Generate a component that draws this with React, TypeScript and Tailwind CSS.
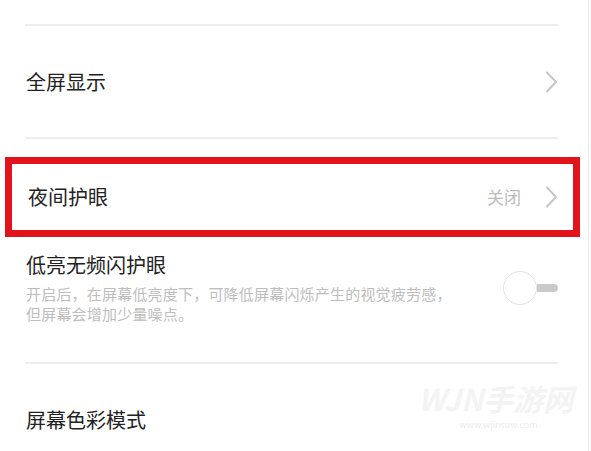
import React from "react";

const Chevron: React.FC = () => (
  <svg width="13" height="22" viewBox="0 0 13 22" fill="none">
    <polyline
      points="2,1.5 11,11 2,20.5"
      stroke="#c6c6c6"
      strokeWidth="2"
      strokeLinecap="round"
      strokeLinejoin="round"
    />
  </svg>
);

const Toggle: React.FC = () => (
  <div className="flex items-center shrink-0">
    <div className="w-[34px] h-[34px] rounded-full border border-[#e2e2e2] bg-white" />
    <div className="w-[21px] h-[8px] rounded-r-full bg-[#cacaca]" />
  </div>
);

const Divider: React.FC = () => <div className="h-[2px] shrink-0 bg-[#ededed]" />;

export default function App() {
  return (
    <div
      className="relative flex w-[591px] h-[451px] overflow-hidden bg-white"
      style={{ fontFamily: '"Noto Sans CJK SC", "Noto Sans", sans-serif' }}
    >
      <div className="flex flex-col w-[589px] h-full border-r border-[#ebebeb] pl-[25px] pr-[30px] pt-[24px]">
        <Divider />
        <div className="flex shrink-0 items-center justify-between h-[111px] pl-[1px]">
          <span className="text-[20px] leading-[26px] text-[#222]">全屏显示</span>
          <Chevron />
        </div>
        <Divider />

        <div className="shrink-0 mt-[18px] ml-[-20px] mr-[-22px] h-[80px] border-[7px] border-[#e3131b] flex items-center justify-between pl-[16px] pr-[15px]">
          <span className="text-[20px] leading-[26px] text-[#222]">夜间护眼</span>
          <div className="flex items-center gap-[24px]">
            <span className="text-[17px] text-[#bcbcbc]">关闭</span>
            <Chevron />
          </div>
        </div>

        <div className="shrink-0 mt-[15px] flex items-center justify-between pl-[1px]">
          <div className="flex flex-col">
            <span className="text-[20px] leading-[26px] text-[#222]">低亮无频闪护眼</span>
            <p className="mt-[6px] text-[15px] leading-[20px] text-[#bdbdbd] tracking-[0.2px]">
              开启后，在屏幕低亮度下，可降低屏幕闪烁产生的视觉疲劳感，
              <br />
              但屏幕会增加少量噪点。
            </p>
          </div>
          <Toggle />
        </div>

        <div className="shrink-0 mt-[38px]">
          <Divider />
        </div>
        <div className="flex shrink-0 items-center justify-between h-[111px] pl-[1px]">
          <span className="text-[20px] leading-[26px] text-[#222]">屏幕色彩模式</span>
        </div>
      </div>

      <div className="absolute left-[418px] top-[380px] flex flex-col items-center gap-[3px] pointer-events-none">
        <span className="whitespace-nowrap pr-[6px] text-[30px] leading-[36px] font-bold italic text-[#f3f3f3]">
          WJN手游网
        </span>
        <span className="whitespace-nowrap text-[9px] leading-[11px] text-[#ebebeb]">www.wjinsuw.com</span>
      </div>
    </div>
  );
}
